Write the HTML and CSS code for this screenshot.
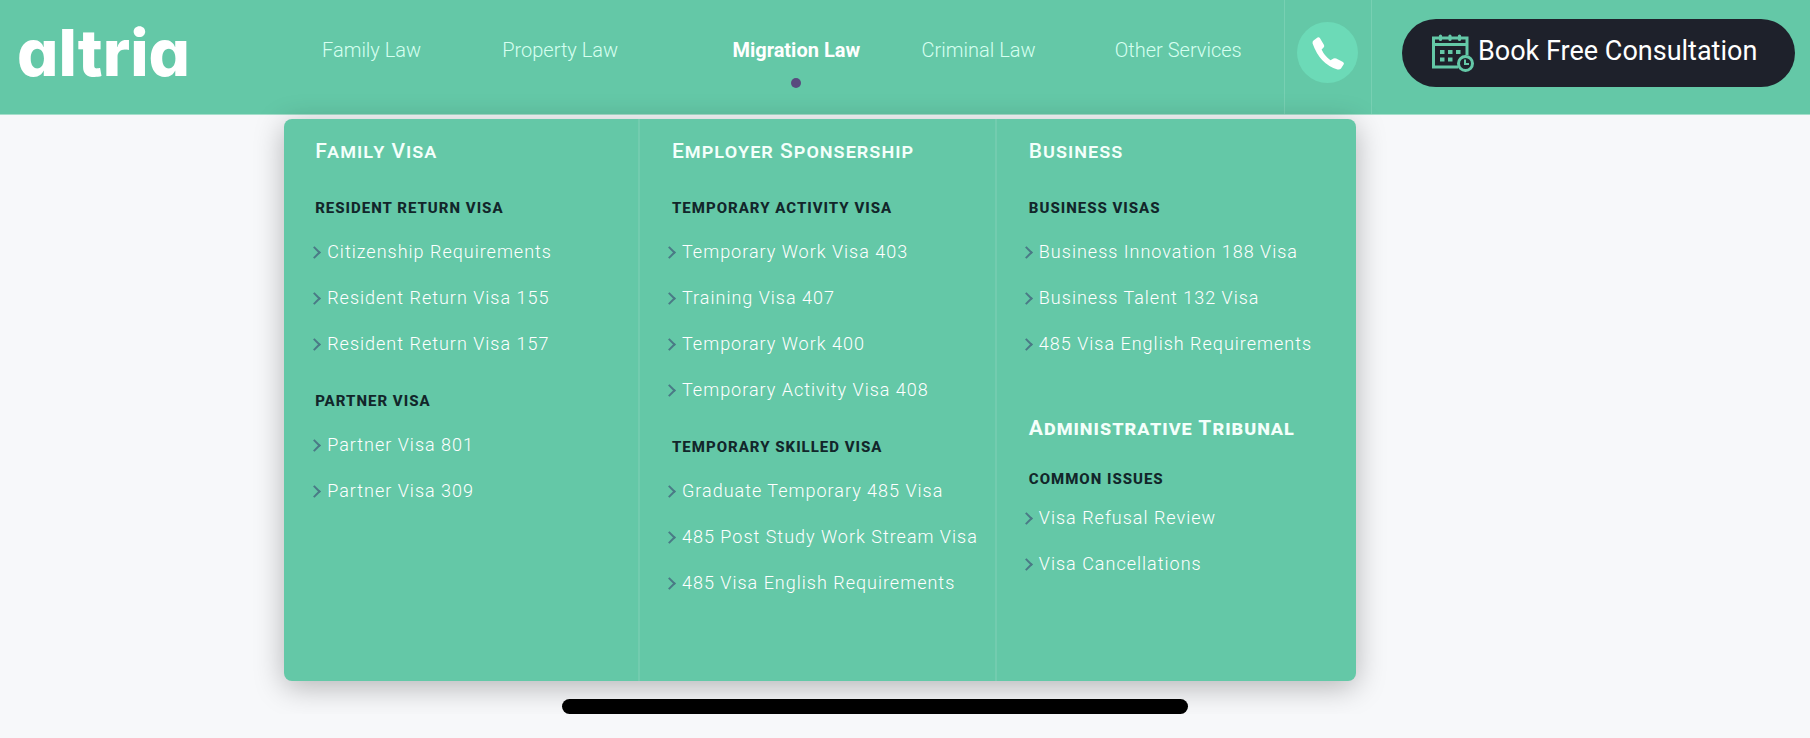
FILE: index.html
```html
<!DOCTYPE html>
<html lang="en">
<head>
<meta charset="utf-8">
<title>altria – Migration Law</title>
<link rel="stylesheet" href="styles.css">
</head>
<body>
<header class="header">
  <a class="logo" href="#">altria</a>
  <nav class="nav" aria-label="Main">
    <a class="nav-link" href="#">Family Law</a>
    <a class="nav-link" href="#">Property Law</a>
    <a class="nav-link active" href="#" aria-current="page">Migration Law</a>
    <a class="nav-link" href="#">Criminal Law</a>
    <a class="nav-link" href="#">Other Services</a>
  </nav>
  <div class="call">
    <button class="call-button" type="button" aria-label="Call us">
      <svg width="34" height="34" viewBox="0 0 34 34" fill="#fff" aria-hidden="true"><path d="M2.500 4.500L6.500 1.600Q8 .8 9 2.200L13 9Q13.700 10.400 12.600 11.600L10.600 13.500Q13.500 20 19.500 24.200L22.500 22.600Q23.800 21.900 25.200 22.600L32 26Q33.600 27 32.600 28.600L30 32.500Q28.800 34 26.500 33.400Q9 28.500 1.600 7.500Q1.200 5.600 2.500 4.500Z"/></svg>
    </button>
  </div>
  <button class="book" type="button">
    <svg class="book-icon" width="42" height="40" viewBox="0 0 42 40" fill="none" stroke="#64c8a7" aria-hidden="true">
      <path stroke-width="3" d="M26 34H1.500V5H35V22M1.500 11.500H35"/>
      <path stroke-width="3.200" stroke-linecap="round" d="M8.500 3V6.500M18 3V6.500M27.500 3V6.500"/>
      <path stroke="none" fill="#64c8a7" d="M8 17h4.500v4H8zM16 17h4.500v4H16zM24 17h4.500v4H24zM8 24.500h4.500v4H8zM16 24.500h4.500v4H16z"/>
      <circle cx="33.500" cy="30.500" r="7" fill="#1e212b" stroke-width="3"/>
      <path stroke-width="2" d="M33 26.500V31H37"/>
    </svg>
    <span class="book-text">Book Free Consultation</span>
  </button>
</header>

<main class="main">
  <section class="menu" aria-label="Migration Law">
    <div class="column">
      <h2 class="title">Family Visa</h2>
      <h3 class="group">Resident return visa</h3>
      <ul class="links">
        <li><a href="#">Citizenship Requirements</a></li>
        <li><a href="#">Resident Return Visa 155</a></li>
        <li><a href="#">Resident Return Visa 157</a></li>
      </ul>
      <h3 class="group">Partner visa</h3>
      <ul class="links">
        <li><a href="#">Partner Visa 801</a></li>
        <li><a href="#">Partner Visa 309</a></li>
      </ul>
    </div>
    <div class="column outdent">
      <h2 class="title">Employer Sponsership</h2>
      <h3 class="group">Temporary activity visa</h3>
      <ul class="links">
        <li><a href="#">Temporary Work Visa 403</a></li>
        <li><a href="#">Training Visa 407</a></li>
        <li><a href="#">Temporary Work 400</a></li>
        <li><a href="#">Temporary Activity Visa 408</a></li>
      </ul>
      <h3 class="group">Temporary skilled visa</h3>
      <ul class="links">
        <li><a href="#">Graduate Temporary 485 Visa</a></li>
        <li><a href="#">485 Post Study Work Stream Visa</a></li>
        <li><a href="#">485 Visa English Requirements</a></li>
      </ul>
    </div>
    <div class="column outdent">
      <h2 class="title">Business</h2>
      <h3 class="group">Business visas</h3>
      <ul class="links">
        <li><a href="#">Business Innovation 188 Visa</a></li>
        <li><a href="#">Business Talent 132 Visa</a></li>
        <li><a href="#">485 Visa English Requirements</a></li>
      </ul>
      <div class="compact">
        <h2 class="title strong">Administrative Tribunal</h2>
        <h3 class="group">Common issues</h3>
        <ul class="links">
          <li><a href="#">Visa Refusal Review</a></li>
          <li><a href="#">Visa Cancellations</a></li>
        </ul>
      </div>
    </div>
  </section>
  <div class="home-bar"></div>
</main>
</body>
</html>
```

FILE: styles.css
```css
* { box-sizing: border-box; }
body {
  margin: 0;
  background: #f7f8fa;
  font-family: Roboto, "Liberation Sans", sans-serif;
}
a { color: inherit; text-decoration: none; }
h2, h3, ul { margin: 0; padding: 0; }
button { border: 0; font: inherit; cursor: pointer; }

.header {
  display: flex;
  height: 115px;
  padding-right: 15px;
  background: #64c8a7;
  border-bottom: 1px solid #a5dfcb;
}
.logo {
  flex: 0 0 322px;
  padding: 14px 0 0 17px;
  color: #fff;
  font-family: Inter, sans-serif;
  font-size: 65px;
  font-weight: 800;
  line-height: 78px;
  font-feature-settings: "cv11";
}
.nav {
  flex: 1;
  display: grid;
  grid-template-columns: 180fr 230fr 189fr 193fr 169fr;
  justify-items: start;
  align-items: start;
  padding-top: 38px;
}
.nav-link {
  position: relative;
  color: #d6fff0;
  font-size: 20px;
  font-weight: 300;
  line-height: 24px;
  white-space: nowrap;
}
.nav-link.active { color: #fff; font-weight: 700; }
.nav-link.active::after {
  content: "";
  position: absolute;
  top: 40px;
  left: calc(50% - 5px);
  width: 10px;
  height: 10px;
  border-radius: 50%;
  background: #594a7e;
}
.call {
  flex: 0 0 88px;
  padding: 22px 12px 0;
  border: 1px solid #78d0b3;
  border-width: 0 1px;
}
.call-button {
  display: flex;
  align-items: center;
  justify-content: center;
  width: 61px;
  height: 61px;
  padding: 0;
  border-radius: 50%;
  background: #6cdab7;
}
.book {
  display: flex;
  align-items: center;
  gap: 4px;
  flex: 0 0 393px;
  height: 68px;
  margin: 19px 0 0 30px;
  padding: 0 30px;
  border-radius: 34px;
  background: #1e212b;
  color: #fff;
  font-size: 27px;
  line-height: 32px;
  white-space: nowrap;
}
.book-icon { flex: none; }
.book-text { padding-bottom: 4px; }

.main { padding-top: 4px; }
.menu {
  position: relative;
  display: grid;
  grid-template-columns: 354fr 357fr 361fr;
  width: 59.2%;
  min-height: 562px;
  margin-left: 15.7%;
  border-radius: 8px;
  background: #64c8a7;
  box-shadow: 0 6px 30px rgba(0, 0, 0, 0.28);
}
.column { padding: 19px 0 0 31px; }
.column + .column { padding-left: 32px; border-left: 2px solid #73ccaf; }
.title {
  color: #f4fffb;
  font-size: 21px;
  font-weight: 500;
  line-height: 26px;
  letter-spacing: 1px;
  font-variant: small-caps;
}
.title.strong { font-weight: 700; }
.group {
  margin: 24px 0 11px;
  color: #12262a;
  font-size: 15px;
  font-weight: 800;
  line-height: 20px;
  letter-spacing: 1px;
  text-transform: uppercase;
}
.title + .group { margin-top: 34px; }
.links { list-style: none; }
.links li {
  display: flex;
  align-items: center;
  gap: 8px;
  color: #fff;
  font-size: 18px;
  font-weight: 300;
  line-height: 46px;
  letter-spacing: 1px;
  white-space: nowrap;
}
.links li::before {
  content: "";
  width: 7px;
  height: 7px;
  margin-left: -5px;
  border: solid #4a7a86;
  border-width: 2px 2px 0 0;
  transform: rotate(45deg);
}
.outdent .links { margin-left: -2px; }
.compact { margin-top: 48px; }
.compact .title + .group { margin: 28px 0 6px; }
.home-bar {
  position: relative;
  width: 34.6%;
  height: 15px;
  margin: 18px 0 0 31.05%;
  border-radius: 8px;
  background: #000;
}
```
